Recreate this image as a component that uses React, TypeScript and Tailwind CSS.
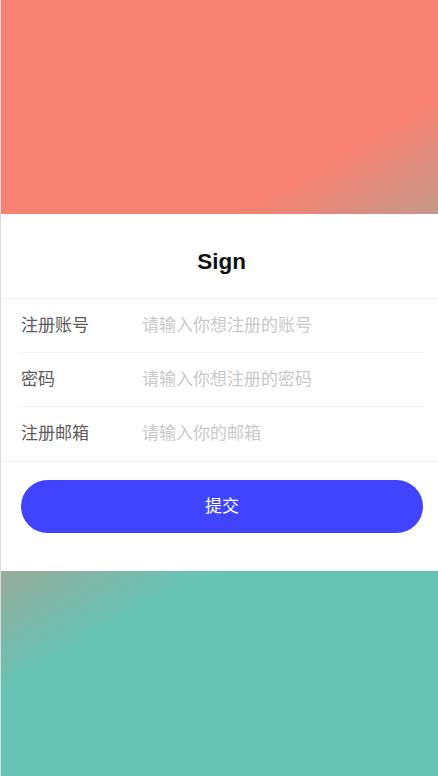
const fields = [
  { label: "注册账号", placeholder: "请输入你想注册的账号", type: "text" },
  { label: "密码", placeholder: "请输入你想注册的密码", type: "password" },
  { label: "注册邮箱", placeholder: "请输入你的邮箱", type: "email" },
];

export default function App() {
  return (
    <div className="min-h-[776px] w-full flex flex-col border-l border-[#dcdcdc] bg-[linear-gradient(150deg,#f78273_34%,#66c2b2_67%)] font-['Liberation_Sans','Noto_Sans_CJK_SC',sans-serif]">
      {/* top band */}
      <div className="h-[214px]" />

      {/* form card */}
      <div className="bg-white">
        <h1 className="pt-[34px] pb-[22px] pl-[4px] text-center text-[22.5px] leading-[28px] font-bold text-[#111] border-b border-[#f2f2f2]">
          Sign
        </h1>

        <div className="pl-[20px] pr-[14px]">
          {fields.map((f, i) => (
            <label
              key={f.label}
              className={`flex items-center h-[54px] ${i < fields.length - 1 ? "border-b border-[#f2f2f2]" : ""}`}
            >
              <span className="w-[121px] shrink-0 text-[17px] text-[#5a5a5a]">{f.label}</span>
              <input
                type={f.type}
                placeholder={f.placeholder}
                className="flex-1 min-w-0 bg-transparent outline-none text-[17px] text-[#333] placeholder:text-[#c9c9c9]"
              />
            </label>
          ))}
        </div>

        <div className="border-t border-[#f2f2f2] pt-[18px] pb-[38px] pl-[20px] pr-[15px]">
          <button className="w-full h-[53px] rounded-full bg-[#4044ff] text-white text-[17px]">
            提交
          </button>
        </div>
      </div>

      {/* bottom band */}
      <div className="flex-1" />
    </div>
  );
}
